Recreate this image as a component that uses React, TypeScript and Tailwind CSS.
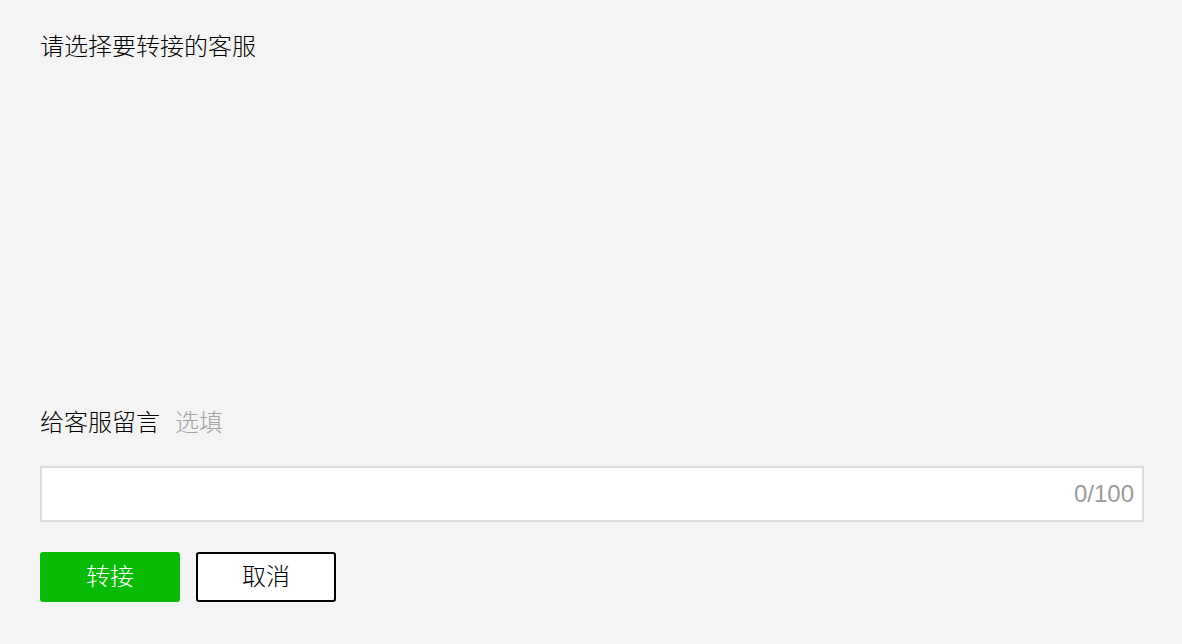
import React from "react";

export default function App() {
  const font = { fontFamily: '"Liberation Sans", "Noto Sans CJK SC", sans-serif' };
  return (
    <div
      className="w-[1182px] h-[644px] bg-[#f4f4f4] text-[#000] flex flex-col pl-[40px] pr-[38px] pt-[31px] font-light"
      style={font}
    >
      <div className="text-[24px] leading-[32px]">请选择要转接的客服</div>
      <div className="h-[344px]" />
      <div className="flex items-center text-[24px] leading-[32px]">
        <span>给客服留言</span>
        <span className="ml-[15px] text-[#a3a3a3]">选填</span>
      </div>
      <div className="mt-[27px] h-[56px] bg-white border-2 border-[#dddddd] flex items-center justify-end pr-[8px]">
        <span className="text-[24px] leading-[32px] text-[#9b9b9b]">0/100</span>
      </div>
      <div className="mt-[30px] flex gap-[16px]">
        <button className="w-[140px] h-[50px] rounded-[3px] bg-[#09bb07] text-white text-[24px] leading-[32px] flex items-center justify-center">
          转接
        </button>
        <button className="w-[140px] h-[50px] rounded-[3px] bg-white border-2 border-black text-black text-[24px] leading-[32px] flex items-center justify-center">
          取消
        </button>
      </div>
    </div>
  );
}
